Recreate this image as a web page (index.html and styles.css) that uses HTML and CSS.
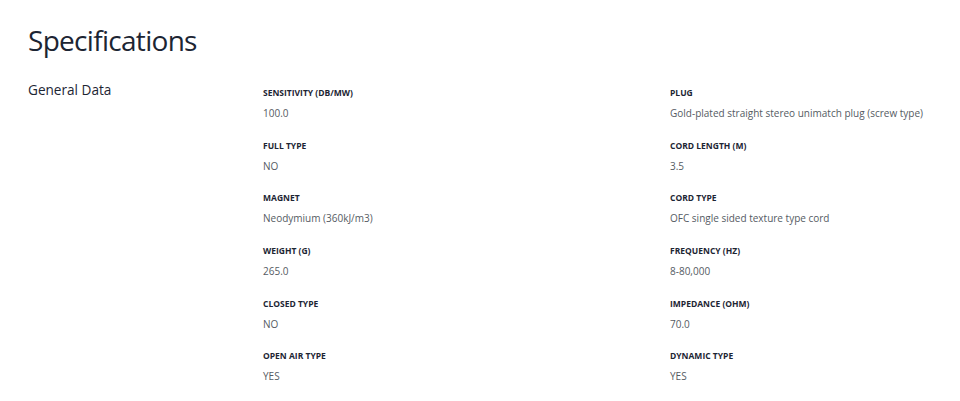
FILE: index.html
```html
<!DOCTYPE html>
<html>
<head>
<meta charset="utf-8">
<link rel="stylesheet" href="styles.css">
</head>
<body>
<div class="page">
  <h1 class="title">Specifications</h1>
  <section class="group">
    <h2 class="group-name">General Data</h2>
    <div class="specs">
      <div class="spec"><div class="label">Sensitivity (dB/mW)</div><div class="value">100.0</div></div>
      <div class="spec"><div class="label">Plug</div><div class="value">Gold-plated straight stereo unimatch plug (screw type)</div></div>
      <div class="spec"><div class="label">Full Type</div><div class="value">NO</div></div>
      <div class="spec"><div class="label">Cord Length (m)</div><div class="value">3.5</div></div>
      <div class="spec"><div class="label">Magnet</div><div class="value">Neodymium (360kJ/m3)</div></div>
      <div class="spec"><div class="label">Cord Type</div><div class="value">OFC single sided texture type cord</div></div>
      <div class="spec"><div class="label">Weight (g)</div><div class="value">265.0</div></div>
      <div class="spec"><div class="label">Frequency (Hz)</div><div class="value">8-80,000</div></div>
      <div class="spec"><div class="label">Closed Type</div><div class="value">NO</div></div>
      <div class="spec"><div class="label">Impedance (ohm)</div><div class="value">70.0</div></div>
      <div class="spec"><div class="label">Open Air Type</div><div class="value">YES</div></div>
      <div class="spec"><div class="label">Dynamic Type</div><div class="value">YES</div></div>
    </div>
  </section>
</div>
</body>
</html>
```
FILE: styles.css
```css
html, body {
  margin: 0;
  padding: 0;
  background: #ffffff;
}
body {
  font-family: "Open Sans", "Noto Sans", sans-serif;
  color: #1c2533;
}
.page {
  padding: 18px 28px 0 28px;
}
.title {
  margin: 0;
  font-size: 28px;
  font-weight: 400;
  line-height: 44px;
  letter-spacing: -0.7px;
  color: #1c2533;
}
.group {
  display: grid;
  grid-template-columns: 235px 1fr;
  margin-top: 25px;
}
.group-name {
  margin: 0;
  font-size: 13.6px;
  font-weight: 400;
  line-height: 20px;
  margin-top: -7px;
  color: #1c2533;
}
.specs {
  display: grid;
  grid-template-columns: 407px 1fr;
  row-gap: 19.7px;
}
.spec {
  display: flex;
  flex-direction: column;
  gap: 7px;
}
.label {
  font-size: 8.5px;
  font-weight: 700;
  text-transform: uppercase;
  line-height: 12px;
  color: #1c2533;
}
.value {
  font-size: 10px;
  line-height: 14px;
  color: #555b63;
}
```
